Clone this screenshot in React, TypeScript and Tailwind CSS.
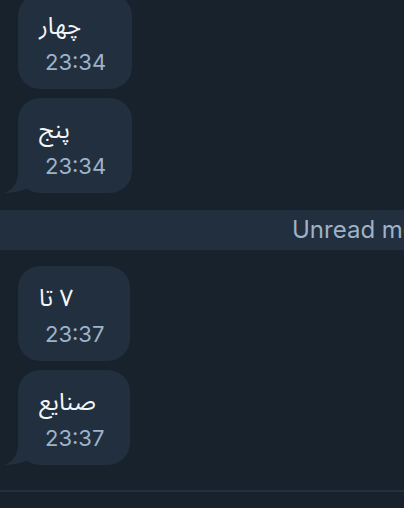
import React from 'react';

type Message = {
  text: string;
  time: string;
  tail?: boolean;
};

const before: Message[] = [
  { text: 'چهار', time: '23:34' },
  { text: 'پنج', time: '23:34', tail: true },
];

const after: Message[] = [
  { text: '۷ تا', time: '23:37' },
  { text: 'صنایع', time: '23:37', tail: true },
];

function Bubble({ msg, className = '' }: { msg: Message; className?: string }) {
  return (
    <div className={`relative self-start ${className}`}>
      {msg.tail && (
        <svg
          className="absolute left-[-13px] bottom-0"
          width="30"
          height="22"
          viewBox="0 0 30 22"
        >
          <path d="M13 0 C13 11 9 18 0 22 C10 22 20 19 28 15 L28 0 Z" fill="#212f3f" />
        </svg>
      )}
      <div className="relative flex flex-col items-start bg-[#212f3f] rounded-[22px] h-[95px] pl-[21px] pr-[26px] pt-[15px]">
        <div
          dir="rtl"
          className="text-[24px] leading-[36px] text-[#f4f6f8] font-['Noto_Sans_Arabic','DejaVu_Sans',sans-serif]"
        >
          {msg.text}
        </div>
        <div className="mt-[3px] pl-[6px] text-[22px] leading-[28px] text-[#9fb2c6] font-['Inter',sans-serif]">
          {msg.time}
        </div>
      </div>
    </div>
  );
}

export default function App() {
  return (
    <div className="h-[508px] w-full overflow-hidden bg-[#18222d] flex flex-col">
      {/* earlier messages */}
      <div className="flex flex-col gap-[9px] pl-[18px] mt-[-6px]">
        {before.map((m, i) => (
          <Bubble key={i} msg={m} />
        ))}
      </div>

      {/* unread divider */}
      <div className="mt-[17px] h-[40px] bg-[#212f3f] flex items-center pl-[292px] whitespace-nowrap overflow-hidden">
        <span className="text-[24px] text-[#9fb2c6] font-['Inter',sans-serif]">Unread messages</span>
      </div>

      <div className="flex flex-col gap-[9px] pl-[18px] mt-[16px]">
        {after.map((m, i) => (
          <Bubble key={i} msg={m} />
        ))}
      </div>

      <div className="mt-[25px] border-t-2 border-[#223142]" />
    </div>
  );
}
